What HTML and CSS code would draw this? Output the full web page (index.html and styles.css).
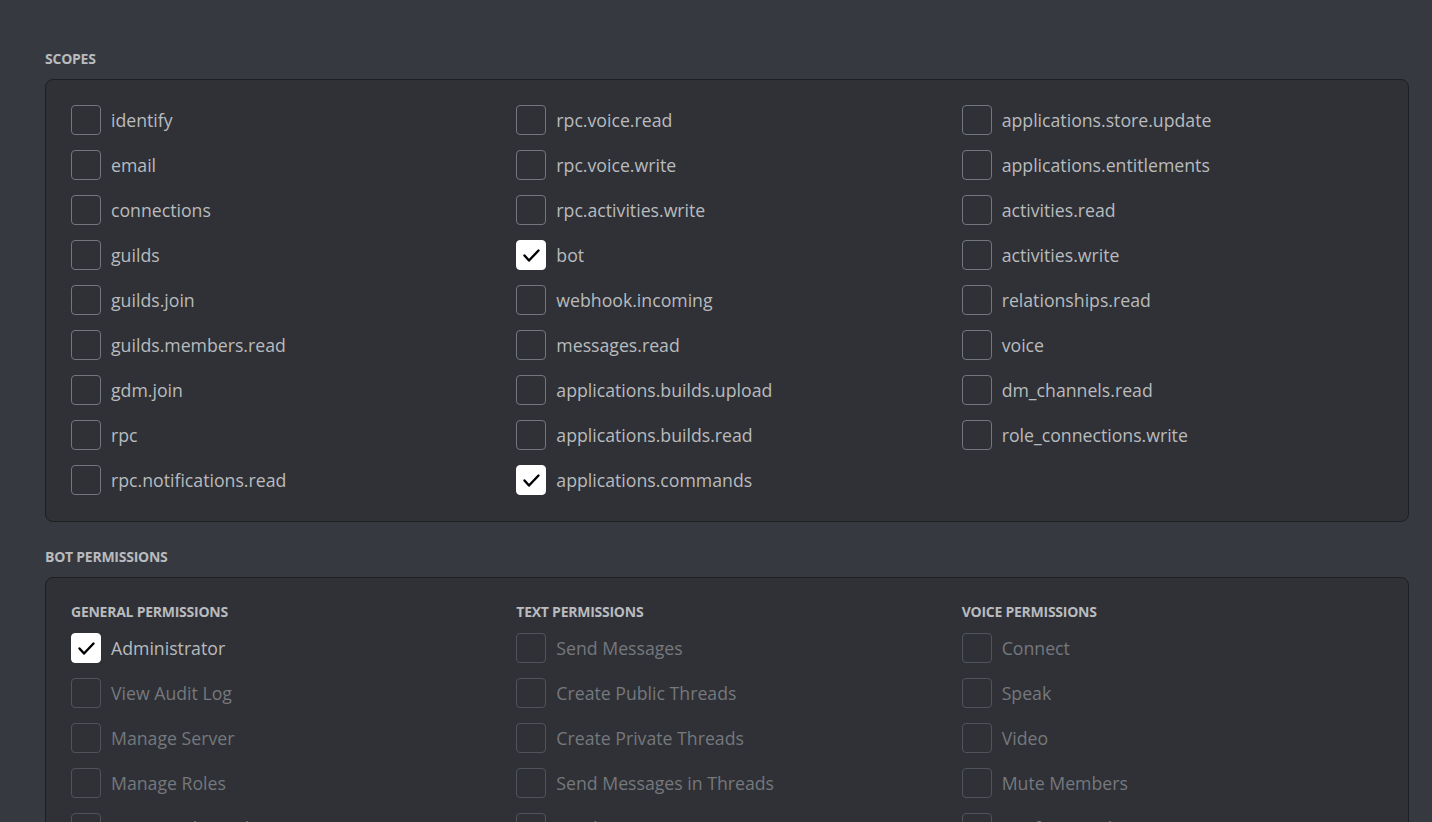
FILE: index.html
```html
<!DOCTYPE html>
<html lang="en">
<head>
<meta charset="utf-8">
<title>OAuth2 URL Generator</title>
<link rel="stylesheet" href="styles.css">
</head>
<body>
<main class="page">
  <section class="section">
    <h2 class="heading">Scopes</h2>
    <div class="box">
      <div class="grid">
        <div class="col">
          <label class="item"><span class="cb"></span><span class="lbl">identify</span></label>
          <label class="item"><span class="cb"></span><span class="lbl">email</span></label>
          <label class="item"><span class="cb"></span><span class="lbl">connections</span></label>
          <label class="item"><span class="cb"></span><span class="lbl">guilds</span></label>
          <label class="item"><span class="cb"></span><span class="lbl">guilds.join</span></label>
          <label class="item"><span class="cb"></span><span class="lbl">guilds.members.read</span></label>
          <label class="item"><span class="cb"></span><span class="lbl">gdm.join</span></label>
          <label class="item"><span class="cb"></span><span class="lbl">rpc</span></label>
          <label class="item"><span class="cb"></span><span class="lbl">rpc.notifications.read</span></label>
        </div>
        <div class="col">
          <label class="item"><span class="cb"></span><span class="lbl">rpc.voice.read</span></label>
          <label class="item"><span class="cb"></span><span class="lbl">rpc.voice.write</span></label>
          <label class="item"><span class="cb"></span><span class="lbl">rpc.activities.write</span></label>
          <label class="item"><span class="cb checked"><svg viewBox="0 0 30 30" width="30" height="30"><path d="M8.5 15.5 L13 20.5 L22.5 10.5" fill="none" stroke="#000" stroke-width="2.4" stroke-linecap="round" stroke-linejoin="round"/></svg></span><span class="lbl">bot</span></label>
          <label class="item"><span class="cb"></span><span class="lbl">webhook.incoming</span></label>
          <label class="item"><span class="cb"></span><span class="lbl">messages.read</span></label>
          <label class="item"><span class="cb"></span><span class="lbl">applications.builds.upload</span></label>
          <label class="item"><span class="cb"></span><span class="lbl">applications.builds.read</span></label>
          <label class="item"><span class="cb checked"><svg viewBox="0 0 30 30" width="30" height="30"><path d="M8.5 15.5 L13 20.5 L22.5 10.5" fill="none" stroke="#000" stroke-width="2.4" stroke-linecap="round" stroke-linejoin="round"/></svg></span><span class="lbl">applications.commands</span></label>
        </div>
        <div class="col">
          <label class="item"><span class="cb"></span><span class="lbl">applications.store.update</span></label>
          <label class="item"><span class="cb"></span><span class="lbl">applications.entitlements</span></label>
          <label class="item"><span class="cb"></span><span class="lbl">activities.read</span></label>
          <label class="item"><span class="cb"></span><span class="lbl">activities.write</span></label>
          <label class="item"><span class="cb"></span><span class="lbl">relationships.read</span></label>
          <label class="item"><span class="cb"></span><span class="lbl">voice</span></label>
          <label class="item"><span class="cb"></span><span class="lbl">dm_channels.read</span></label>
          <label class="item"><span class="cb"></span><span class="lbl">role_connections.write</span></label>
        </div>
      </div>
    </div>
  </section>

  <section class="section">
    <h2 class="heading">Bot Permissions</h2>
    <div class="box">
      <div class="grid">
        <div class="col">
          <h3 class="subheading">General Permissions</h3>
          <label class="item"><span class="cb checked"><svg viewBox="0 0 30 30" width="30" height="30"><path d="M8.5 15.5 L13 20.5 L22.5 10.5" fill="none" stroke="#000" stroke-width="2.4" stroke-linecap="round" stroke-linejoin="round"/></svg></span><span class="lbl">Administrator</span></label>
          <label class="item disabled"><span class="cb"></span><span class="lbl">View Audit Log</span></label>
          <label class="item disabled"><span class="cb"></span><span class="lbl">Manage Server</span></label>
          <label class="item disabled"><span class="cb"></span><span class="lbl">Manage Roles</span></label>
          <label class="item disabled"><span class="cb"></span><span class="lbl">Manage Channels</span></label>
          <label class="item disabled"><span class="cb"></span><span class="lbl">Kick Members</span></label>
        </div>
        <div class="col">
          <h3 class="subheading">Text Permissions</h3>
          <label class="item disabled"><span class="cb"></span><span class="lbl">Send Messages</span></label>
          <label class="item disabled"><span class="cb"></span><span class="lbl">Create Public Threads</span></label>
          <label class="item disabled"><span class="cb"></span><span class="lbl">Create Private Threads</span></label>
          <label class="item disabled"><span class="cb"></span><span class="lbl">Send Messages in Threads</span></label>
          <label class="item disabled"><span class="cb"></span><span class="lbl">Send TTS Messages</span></label>
          <label class="item disabled"><span class="cb"></span><span class="lbl">Manage Messages</span></label>
        </div>
        <div class="col">
          <h3 class="subheading">Voice Permissions</h3>
          <label class="item disabled"><span class="cb"></span><span class="lbl">Connect</span></label>
          <label class="item disabled"><span class="cb"></span><span class="lbl">Speak</span></label>
          <label class="item disabled"><span class="cb"></span><span class="lbl">Video</span></label>
          <label class="item disabled"><span class="cb"></span><span class="lbl">Mute Members</span></label>
          <label class="item disabled"><span class="cb"></span><span class="lbl">Deafen Members</span></label>
          <label class="item disabled"><span class="cb"></span><span class="lbl">Move Members</span></label>
        </div>
      </div>
    </div>
  </section>
</main>
</body>
</html>
```

FILE: styles.css
```css
html, body {
  margin: 0;
  padding: 0;
  background: #36393f;
  overflow: hidden;
}

body {
  font-family: "Open Sans", "Noto Sans", sans-serif;
  color: #b9bbbe;
}

.page {
  padding: 51px 23px 0 45px;
}

.section {
  margin-bottom: 27px;
}

.heading {
  margin: 0 0 12px;
  font-size: 14px;
  line-height: 16px;
  font-weight: 700;
  text-transform: uppercase;
  color: #b9bbbe;
  letter-spacing: -0.25px;
}

.box {
  background: #2f3136;
  border: 1px solid #1e1f22;
  border-radius: 8px;
  padding: 25px 25px 26px 25px;
}

.grid {
  display: grid;
  grid-template-columns: repeat(3, 1fr);
  column-gap: 24px;
}

.col {
  display: flex;
  flex-direction: column;
  gap: 15px;
}

.subheading {
  margin: 0 0 -3px;
  font-size: 14px;
  line-height: 18px;
  font-weight: 700;
  text-transform: uppercase;
  color: #b9bbbe;
  letter-spacing: -0.25px;
}

.item {
  display: flex;
  align-items: center;
  gap: 10px;
  height: 30px;
}

.cb {
  box-sizing: border-box;
  width: 30px;
  height: 30px;
  flex: none;
  border: 1px solid #72767d;
  border-radius: 4px;
}

.cb svg {
  display: block;
  margin: -1px;
}

.cb.checked {
  background: #ffffff;
  border-color: #ffffff;
}

.lbl {
  font-size: 17.7px;
  line-height: 24px;
  color: #b9bbbe;
  white-space: nowrap;
}

.item.disabled .cb {
  border-color: #4f535a;
}

.item.disabled .lbl {
  color: #75787d;
}
```
